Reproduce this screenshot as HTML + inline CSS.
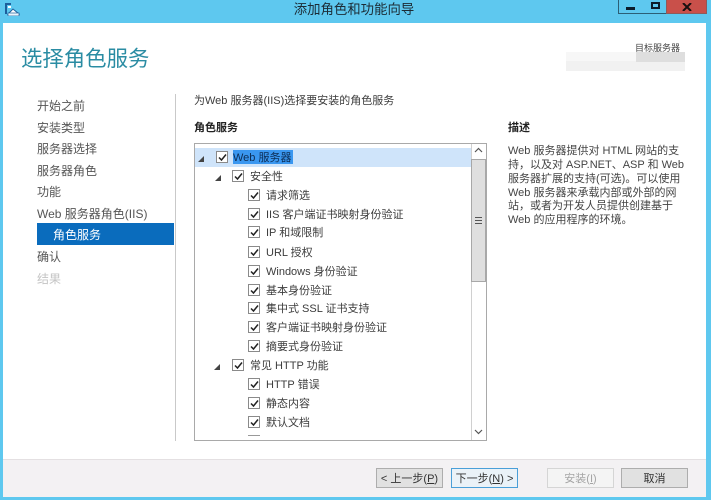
<!DOCTYPE html>
<html lang="zh-CN"><head><meta charset="utf-8"><title>添加角色和功能向导</title>
<style>
html,body{margin:0;padding:0;width:711px;height:500px;overflow:hidden;background:#5ec8ef}
*{box-sizing:border-box}
body{font-family:"Liberation Sans","Noto Sans CJK SC",sans-serif;position:relative}
#all{position:absolute;left:0;top:0;width:711px;height:500px;overflow:hidden;background:#5ec8ef;filter:blur(.35px)}
.a{position:absolute;white-space:nowrap}
#win{position:absolute;left:3px;top:23px;width:703px;height:474px;background:#fff}
#foot{position:absolute;left:3px;top:459px;width:703px;height:38px;background:#f3f1f3;border-top:1px solid #e4e0e2}
.nav{position:absolute;left:37px;margin-top:1px;font-size:12px;line-height:16px;color:#555;white-space:nowrap}
.t{position:absolute;margin-top:1px;font-size:11px;line-height:14px;color:#3c3c3c;white-space:nowrap}
.cb{position:absolute;width:12px;height:12px;border:1px solid #8a8a8a;background:#fff}
.cb svg{position:absolute;left:0;top:0}
.tri{position:absolute;width:0;height:0;border-style:solid;border-width:0 0 6px 6px;border-color:transparent transparent #444 transparent}
.btn{position:absolute;top:468px;width:67px;height:20px;background:#e1e1e1;border:1px solid #adadad;font-size:11px;line-height:20px;text-align:center;color:#333;white-space:nowrap}
.d{position:absolute;left:508px;margin-top:1px;font-size:11px;line-height:14px;color:#444;white-space:nowrap}
</style></head><body><div id="all">
<svg class="a" style="left:4px;top:2px" width="16" height="14" viewBox="0 0 16 14"><path d="M1 1h6v2H3v9H1z" fill="#1d5f9c"/><path d="M4 4h3v2H4z" fill="#fff"/><path d="M4 12l5-5 6 5z" fill="#fff" stroke="#1d5f9c"/><rect x="4" y="11" width="11" height="3" fill="#e8f4fb" stroke="#1d5f9c" stroke-width=".7"/></svg>
<div class="a" style="left:254px;top:1px;width:200px;text-align:center;font-size:13.4px;line-height:17px;color:#1c2c36">添加角色和功能向导</div>
<div class="a" style="left:618px;top:0;width:25px;height:14px;background:#5ec8ef;border:1px solid #2b5f76;border-top:0"></div>
<div class="a" style="left:626px;top:7px;width:9px;height:3px;background:#0b1c2b"></div>
<div class="a" style="left:642px;top:0;width:25px;height:14px;background:#5ec8ef;border:1px solid #2b5f76;border-top:0;border-left:0"></div>
<div class="a" style="left:651px;top:2px;width:9px;height:7px;border:2px solid #0b1c2b"></div>
<div class="a" style="left:666px;top:0;width:41px;height:14px;background:#c9504a;border:1px solid #8f5a5a;border-top:0"></div>
<svg class="a" style="left:682px;top:3px" width="10" height="8" viewBox="0 0 10 8"><path d="M1 0l8 8M9 0L1 8" stroke="#1b1010" stroke-width="2"/></svg>
<div id="win"></div><div id="foot"></div>
<div class="a" style="left:21px;top:44px;font-size:21.4px;line-height:30px;color:#2a8ca3">选择角色服务</div>
<div class="a" style="left:566px;top:52px;width:119px;height:19px;background:#f1f1f1"></div>
<div class="a" style="left:566px;top:52px;width:71px;height:9px;background:#f7f7f7"></div>
<div class="a" style="left:636px;top:52px;width:49px;height:10px;background:#dedede"></div>
<div class="a" style="left:635px;top:43px;font-size:9px;line-height:11px;color:#444">目标服务器</div>
<div class="nav" style="top:97px">开始之前</div>
<div class="nav" style="top:119px">安装类型</div>
<div class="nav" style="top:140px">服务器选择</div>
<div class="nav" style="top:162px">服务器角色</div>
<div class="nav" style="top:183px">功能</div>
<div class="nav" style="top:205px">Web 服务器角色(IIS)</div>
<div class="a" style="left:37px;top:223px;width:137px;height:22px;background:#0a6cbd"></div>
<div class="nav" style="left:53px;top:226px;color:#fff">角色服务</div>
<div class="nav" style="top:248px">确认</div>
<div class="nav" style="top:270px;color:#c4c4c4">结果</div>
<div class="a" style="left:175px;top:94px;width:1px;height:347px;background:#c9c9c9"></div>
<div class="t" style="left:194px;top:93px">为Web 服务器(IIS)选择要安装的角色服务</div>
<div class="t" style="left:194px;top:120px;font-weight:bold;color:#222">角色服务</div>
<div class="a" style="left:194px;top:143px;width:293px;height:298px;border:1px solid #a9a9a9;background:#fff"></div>
<div class="a" style="left:195px;top:148px;width:276px;height:19px;background:#cfe4fa"></div>
<div class="a" style="left:233px;top:150px;width:60px;height:14px;background:#3a97f0"></div>
<div class="a" style="left:471px;top:144px;width:15px;height:296px;background:#fff;border-left:1px solid #d0d0d0"></div>
<div class="a" style="left:471px;top:159px;width:15px;height:123px;background:#dfdfdf;border:1px solid #a8a8a8"></div>
<div class="a" style="left:475px;top:217px;width:7px;height:7px;border-top:1px solid #555;border-bottom:1px solid #555;background:linear-gradient(#dfdfdf 0 2px,#555 2px 3px,#dfdfdf 3px)"></div>
<svg class="a" style="left:474px;top:147px" width="9" height="6" viewBox="0 0 9 6"><path d="M1 5l3.500-3.500L8 5" fill="none" stroke="#555" stroke-width="1.200"/></svg>
<svg class="a" style="left:474px;top:429px" width="9" height="6" viewBox="0 0 9 6"><path d="M1 1l3.500 3.500L8 1" fill="none" stroke="#555" stroke-width="1.200"/></svg>
<svg width="0" height="0" style="position:absolute"><defs><path id="ck" d="M2 5.500l2.500 2.500L9 2.500" fill="none" stroke="#222" stroke-width="1.500"/></defs></svg>
<div class="tri" style="left:198px;top:156px"></div>
<div class="tri" style="left:215px;top:175px"></div>
<div class="tri" style="left:214px;top:364px"></div>
<div class="cb" style="left:216px;top:151px"><svg width="10" height="10"><use href="#ck"/></svg></div>
<div class="t" style="left:233px;top:150px;color:#0d2d55">Web 服务器</div>
<div class="cb" style="left:232px;top:170px"><svg width="10" height="10"><use href="#ck"/></svg></div>
<div class="t" style="left:250px;top:169px">安全性</div>
<div class="cb" style="left:248px;top:189px"><svg width="10" height="10"><use href="#ck"/></svg></div>
<div class="t" style="left:266px;top:188px">请求筛选</div>
<div class="cb" style="left:248px;top:208px"><svg width="10" height="10"><use href="#ck"/></svg></div>
<div class="t" style="left:266px;top:207px">IIS 客户端证书映射身份验证</div>
<div class="cb" style="left:248px;top:226px"><svg width="10" height="10"><use href="#ck"/></svg></div>
<div class="t" style="left:266px;top:225px">IP 和域限制</div>
<div class="cb" style="left:248px;top:246px"><svg width="10" height="10"><use href="#ck"/></svg></div>
<div class="t" style="left:266px;top:245px">URL 授权</div>
<div class="cb" style="left:248px;top:265px"><svg width="10" height="10"><use href="#ck"/></svg></div>
<div class="t" style="left:266px;top:264px">Windows 身份验证</div>
<div class="cb" style="left:248px;top:284px"><svg width="10" height="10"><use href="#ck"/></svg></div>
<div class="t" style="left:266px;top:283px">基本身份验证</div>
<div class="cb" style="left:248px;top:302px"><svg width="10" height="10"><use href="#ck"/></svg></div>
<div class="t" style="left:266px;top:301px">集中式 SSL 证书支持</div>
<div class="cb" style="left:248px;top:321px"><svg width="10" height="10"><use href="#ck"/></svg></div>
<div class="t" style="left:266px;top:320px">客户端证书映射身份验证</div>
<div class="cb" style="left:248px;top:340px"><svg width="10" height="10"><use href="#ck"/></svg></div>
<div class="t" style="left:266px;top:339px">摘要式身份验证</div>
<div class="cb" style="left:232px;top:359px"><svg width="10" height="10"><use href="#ck"/></svg></div>
<div class="t" style="left:250px;top:358px">常见 HTTP 功能</div>
<div class="cb" style="left:248px;top:378px"><svg width="10" height="10"><use href="#ck"/></svg></div>
<div class="t" style="left:266px;top:377px">HTTP 错误</div>
<div class="cb" style="left:248px;top:397px"><svg width="10" height="10"><use href="#ck"/></svg></div>
<div class="t" style="left:266px;top:396px">静态内容</div>
<div class="cb" style="left:248px;top:416px"><svg width="10" height="10"><use href="#ck"/></svg></div>
<div class="t" style="left:266px;top:415px">默认文档</div>
<div class="a" style="left:248px;top:435px;width:12px;height:1px;background:#999"></div>
<div class="t" style="left:508px;top:120px;font-weight:bold;color:#222">描述</div>
<div class="d" style="top:143px">Web 服务器提供对 HTML 网站的支</div>
<div class="d" style="top:157px">持，以及对 ASP.NET、ASP 和 Web</div>
<div class="d" style="top:171px">服务器扩展的支持(可选)。可以使用</div>
<div class="d" style="top:185px">Web 服务器来承载内部或外部的网</div>
<div class="d" style="top:198px">站，或者为开发人员提供创建基于</div>
<div class="d" style="top:212px">Web 的应用程序的环境。</div>
<div class="btn" style="left:376px">&lt; 上一步(<u>P</u>)</div>
<div class="btn" style="left:451px;border-color:#4a9fd8;background:#eaf2f8">下一步(<u>N</u>) &gt;</div>
<div class="btn" style="left:547px;background:#f4f4f4;border-color:#d5d5d5;color:#a5a5a5">安装(<u>I</u>)</div>
<div class="btn" style="left:621px">取消</div>
</div></body></html>
